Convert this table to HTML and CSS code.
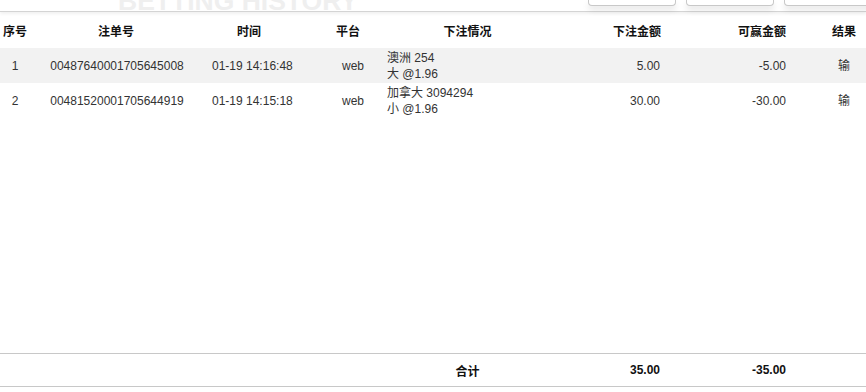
FILE: index.html
```html
<!DOCTYPE html>
<html lang="zh">
<head>
<meta charset="utf-8">
<title>Betting History</title>
<link rel="stylesheet" href="styles.css">
</head>
<body>
<div class="page">
  <div class="topbar">
    <span class="watermark">BETTING HISTORY</span>
    <div class="tabs">
      <span class="tab"></span>
      <span class="tab"></span>
      <span class="tab"></span>
    </div>
  </div>
  <div class="table">
    <div class="row head">
      <div class="c-a">序号</div>
      <div class="c-b">注单号</div>
      <div class="c-c">时间</div>
      <div class="c-d">平台</div>
      <div class="c-e">下注情况</div>
      <div class="c-f">下注金额</div>
      <div class="c-g">可赢金额</div>
      <div class="c-h">结果</div>
    </div>
    <div class="row data alt">
      <div class="c-a">1</div>
      <div class="c-b">00487640001705645008</div>
      <div class="c-c">01-19 14:16:48</div>
      <div class="c-d">web</div>
      <div class="c-e">澳洲 254<br>大 @1.96</div>
      <div class="c-f">5.00</div>
      <div class="c-g">-5.00</div>
      <div class="c-h">输</div>
    </div>
    <div class="row data">
      <div class="c-a">2</div>
      <div class="c-b">00481520001705644919</div>
      <div class="c-c">01-19 14:15:18</div>
      <div class="c-d">web</div>
      <div class="c-e">加拿大 3094294<br>小 @1.96</div>
      <div class="c-f">30.00</div>
      <div class="c-g">-30.00</div>
      <div class="c-h">输</div>
    </div>
    <div class="spacer"></div>
    <div class="row total">
      <div class="c-a"></div>
      <div class="c-b"></div>
      <div class="c-c"></div>
      <div class="c-d"></div>
      <div class="c-e">合计</div>
      <div class="c-f">35.00</div>
      <div class="c-g">-35.00</div>
      <div class="c-h"></div>
    </div>
  </div>
</div>
</body>
</html>
```
FILE: styles.css
```css
* { box-sizing: border-box; }
html, body {
  margin: 0;
  padding: 0;
  background: #fff;
  overflow: hidden;
}
body {
  font-family: "Liberation Sans", "Noto Sans CJK SC", sans-serif;
  font-size: 12px;
  color: #333;
}
.page {
  width: 866px;
  height: 392px;
  display: flex;
  flex-direction: column;
  padding-bottom: 5px;
}
.topbar {
  height: 12px;
  display: flex;
  align-items: flex-start;
  border-bottom: 1px solid #d4d4d4;
  box-shadow: 0 2px 3px rgba(0,0,0,0.06);
  position: relative;
  z-index: 1;
}
.watermark {
  font-family: "Liberation Sans", sans-serif;
  font-weight: bold;
  font-size: 26.5px;
  line-height: 26px;
  margin-top: -12px;
  margin-left: 118px;
  color: #efefef;
  white-space: nowrap;
}
.tabs {
  margin-left: auto;
  display: flex;
  gap: 10px;
  margin-right: -6px;
}
.tab {
  display: block;
  width: 88px;
  height: 6px;
  border: 1px solid #c8c8c8;
  border-top: none;
  border-radius: 0 0 4px 4px;
  background: #fff;
  box-shadow: 0 4px 6px rgba(0,0,0,0.10);
}
.table {
  flex: 1;
  display: flex;
  flex-direction: column;
}
.row {
  display: grid;
  grid-template-columns: 30px 172px 96px 84px 176px 110px 126px 72px;
  align-items: center;
}
.row > div { white-space: nowrap; }
.head {
  height: 36px;
  font-family: "Noto Sans CJK SC", sans-serif;
  font-weight: bold;
  color: #111;
  padding-top: 1px;
}
.head .c-a { text-align: center; }
.head .c-b { text-align: center; }
.head .c-c { text-align: center; padding-right: 2px; }
.head .c-d { text-align: center; padding-left: 16px; }
.head .c-e { text-align: center; padding-right: 5px; }
.head .c-f { text-align: right; padding-right: 7px; }
.head .c-g { text-align: right; padding-right: 8px; }
.head .c-h { text-align: center; padding-left: 28px; }

.data {
  height: 35px;
  line-height: 16px;
  color: #333;
}
.data.alt { background: #f2f2f2; }
.data .c-a { text-align: center; }
.data .c-b { text-align: center; padding-left: 2px; }
.data .c-c { text-align: left; padding-left: 10px; }
.data .c-d { text-align: right; padding-right: 18px; }
.data .c-e { text-align: left; padding-left: 5px; }
.data .c-f { text-align: right; padding-right: 8px; }
.data .c-g { text-align: right; padding-right: 8px; }
.data .c-h { text-align: center; padding-left: 28px; }

.spacer { flex: 1; }

.total {
  height: 34px;
  border-top: 1px solid #c8c8c8;
  border-bottom: 1px solid #c8c8c8;
  font-weight: bold;
  color: #111;
}
.total .c-e { text-align: center; padding-right: 5px; }
.total .c-f { text-align: right; padding-right: 8px; }
.total .c-g { text-align: right; padding-right: 8px; }
```
